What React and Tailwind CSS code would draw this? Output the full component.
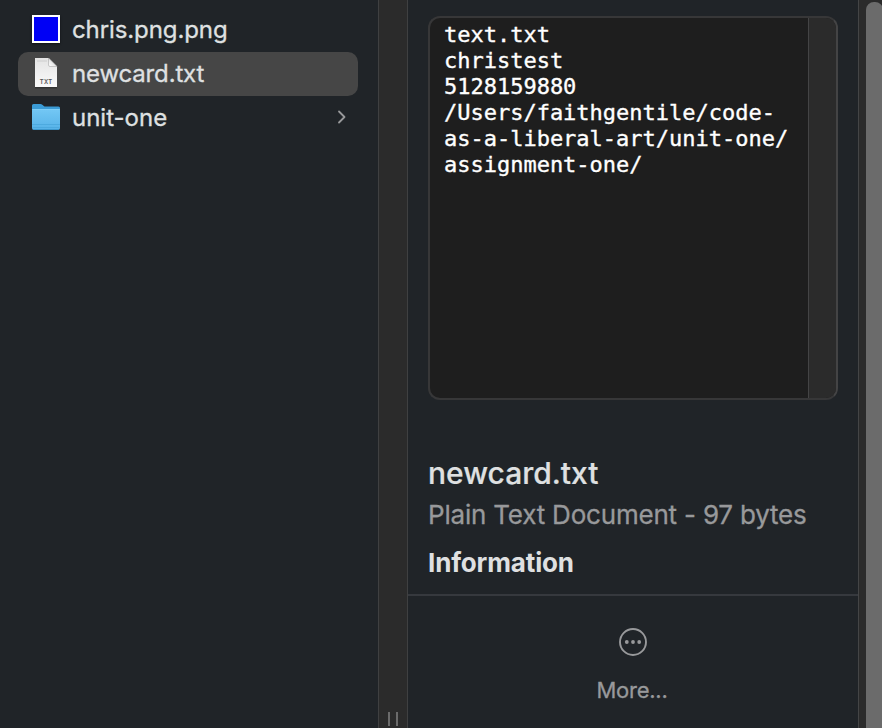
const previewLines = [
  'text.txt',
  'christest',
  '5128159880',
  '/Users/faithgentile/code-',
  'as-a-liberal-art/unit-one/',
  'assignment-one/',
];

function DocumentIcon() {
  return (
    <svg width="28" height="34" viewBox="0 0 28 34" className="shrink-0">
      <defs>
        <linearGradient id="paper" x1="0" y1="0" x2="0" y2="1">
          <stop offset="0" stopColor="#e4e4e4" />
          <stop offset="1" stopColor="#fafafa" />
        </linearGradient>
        <linearGradient id="fold" x1="0" y1="1" x2="1" y2="0">
          <stop offset="0" stopColor="#ffffff" />
          <stop offset="1" stopColor="#c9c9c9" />
        </linearGradient>
      </defs>
      <path d="M3 3h14l8 8.500v20H3z" fill="#000" opacity=".25" />
      <path d="M3 1h13.500L25 9.500V30H3z" fill="url(#paper)" />
      <path d="M16.500 1v7q0 1.500 1.500 1.500h7z" fill="url(#fold)" stroke="#aaa" strokeWidth=".6" />
      <path d="M5 4h10" stroke="#c8c8c8" strokeWidth=".8" />
      <text x="14.200" y="26.600" textAnchor="middle" fontSize="5.800" fontWeight="600" letterSpacing=".4" fill="#555" className="font-['Inter',sans-serif]">TXT</text>
    </svg>
  );
}

function FolderIcon() {
  return (
    <svg width="28" height="28" viewBox="0 0 28 28" className="-mt-[2px] shrink-0">
      <defs>
        <linearGradient id="folder" x1="0" y1="0" x2="0" y2="1">
          <stop offset="0" stopColor="#73c7f4" />
          <stop offset="1" stopColor="#56b2e8" />
        </linearGradient>
      </defs>
      <path d="M0 2.500Q0 1 1.500 1h7q1 0 1.800.7l1.500 1.200q.7.6 1.700.6h13Q28 3.500 28 5v8H0z" fill="#3b9bd5" />
      <path d="M0 7.500Q0 6.300 1.200 6.300h25.600Q28 6.300 28 7.500V25q0 2-2 2H2q-2 0-2-2z" fill="url(#folder)" />
      <path d="M0 6.500h28" stroke="#8bd5fa" strokeWidth=".7" />
      <path d="M0 21.500h28M.5 24.500h27" stroke="#43a1d6" strokeWidth=".6" />
      <path d="M1 26.500h26" stroke="#358fc4" strokeWidth=".8" />
    </svg>
  );
}

export default function App() {
  return (
    <div className="flex h-[728px] w-[882px] overflow-hidden bg-[#202428] font-['Inter',sans-serif] text-[#dfe0e1]">
      <aside className="w-[378px] shrink-0 px-[18px] pt-2 text-[24px] leading-[44px] tracking-[-0.1px] [-webkit-text-stroke:0.3px_currentColor]">
        <div className="flex h-11 items-center pl-[14px]">
          <div className="-mt-[2px] size-7 shrink-0 border-2 border-white bg-[#0000f5] shadow-[0_1px_2px_#0008]" />
          <span className="ml-3">chris.png.png</span>
        </div>
        <div className="flex h-11 w-[340px] items-center rounded-[10px] bg-[#464646] pl-[14px]">
          <DocumentIcon />
          <span className="ml-3 tracking-[-0.15px]">newcard.txt</span>
        </div>
        <div className="flex h-11 items-center pl-[14px]">
          <FolderIcon />
          <span className="ml-3 tracking-[0px]">unit-one</span>
          <svg width="10" height="14" viewBox="0 0 10 14" className="-mt-[2px] mr-[13px] ml-auto" fill="none" stroke="#98999b" strokeWidth="1.800" strokeLinecap="round" strokeLinejoin="round">
            <path d="M2 1.500 7.500 7 2 12.500" />
          </svg>
        </div>
      </aside>

      <div className="flex w-[30px] shrink-0 items-end justify-center gap-[6px] border-x border-[#3f4041] bg-[#2b2b2b] pb-[2px]">
        <div className="h-[14px] w-[2px] bg-[#6b6b6b]" />
        <div className="h-[14px] w-[2px] bg-[#6b6b6b]" />
      </div>

      <main className="flex w-[450px] shrink-0 flex-col">
        <div className="mt-4 ml-5 flex h-[384px] w-[410px] shrink-0 overflow-hidden rounded-xl border-2 border-[#373738] border-r-[#444445] bg-[#1e1e1e]">
          <div className="flex-1 pt-1 pl-[14px] font-['DejaVu_Sans_Mono',monospace] text-[22px] leading-[26px] tracking-[-0.01px] whitespace-pre text-white [-webkit-text-stroke:0.35px_white]">
            {previewLines.map((line) => (
              <div key={line}>{line}</div>
            ))}
          </div>
          <div className="w-[28px] shrink-0 border-l border-[#444445] bg-[#2b2b2b]" />
        </div>
        <h1 className="mt-[55px] ml-5 h-9 text-[30px] leading-9 font-medium [-webkit-text-stroke:0.2px_currentColor]">newcard.txt</h1>
        <p className="mt-[8px] ml-5 h-8 text-[26px] leading-8 tracking-[-0.2px] whitespace-nowrap text-[#98999b] [-webkit-text-stroke:0.3px_currentColor]">Plain Text Document - 97 bytes</p>
        <h2 className="mt-4 ml-5 h-8 text-[26px] leading-8 font-bold tracking-[-0.15px]">Information</h2>
        <div className="mt-[15px] h-[2px] shrink-0 bg-[#36393e]" />
        <div className="flex flex-col items-center pt-8 text-[#98999b]">
          <svg width="28" height="28" viewBox="0 0 28 28" fill="none">
            <circle cx="14" cy="14" r="13" stroke="currentColor" strokeWidth="1.900" />
            <circle cx="7.800" cy="14" r="1.900" fill="currentColor" />
            <circle cx="14" cy="14" r="1.900" fill="currentColor" />
            <circle cx="20.200" cy="14" r="1.900" fill="currentColor" />
          </svg>
          <span className="mt-5 mr-[2px] text-[22px] leading-7 tracking-[-0.25px] [-webkit-text-stroke:0.3px_currentColor]">More...</span>
        </div>
      </main>

      <div className="flex flex-1 border-l border-[#444546] bg-[#2b2b2b] pt-[2px] pl-[7px]">
        <div className="-mr-px flex-1 rounded-t-lg bg-[#6b6b6b]" />
      </div>
    </div>
  );
}
